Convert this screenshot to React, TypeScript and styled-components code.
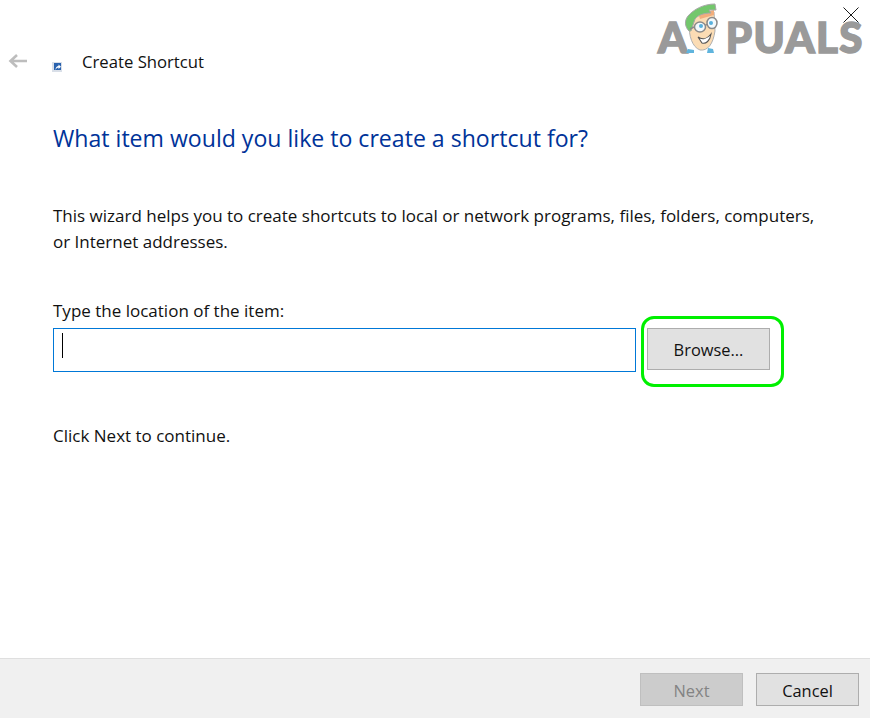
import styled, { createGlobalStyle } from "styled-components"

const GlobalStyle = createGlobalStyle`
html, body {
  margin: 0;
  padding: 0;
  background: #fff;
}
#root {
  width: 870px;
  height: 718px;
}
`

function FaceLogo() {
  return (
    <svg width="42" height="54" viewBox="0 0 42 54">
      <path d="M4 53 L6 49 L12 50 L12 53 Z M25 53 L26 48 L31 49 L32 53 Z" fill="#5fb4dd" />
      <path d="M7 24 C7 36 10 47 18 50 C26 51 31 44 33 31 L32 12 L16 14 Z" fill="#fbdcb4" stroke="#b0b0b0" strokeWidth="1" />
      <path d="M16 13 L32 10 L32 15 L18 19 Z" fill="#f2ad7c" />
      <path d="M7 31 C3 27 2 21 6 16 C12 9 22 4 33 4 L34 10 L27 10 L29 13 C22 13 16 15 13 19 L11 25 L9 31 Z" fill="#73c76c" stroke="#a8a8a8" strokeWidth="1" />
      <ellipse cx="18" cy="27" rx="5.5" ry="5" fill="#f3f9fc" stroke="#8a8a8a" strokeWidth="1.5" />
      <ellipse cx="30" cy="23" rx="5" ry="5.5" fill="#f3f9fc" stroke="#8a8a8a" strokeWidth="1.5" />
      <circle cx="19" cy="26" r="2" fill="#58b0dc" />
      <circle cx="29" cy="23" r="2" fill="#58b0dc" />
      <path d="M12 27 L8 29 M23.5 25 L25 24.5" stroke="#8a8a8a" strokeWidth="1.5" />
      <path d="M16 37 C20 40 25 39 29 34 C28 41 24 44 20 43 Z" fill="#fff" stroke="#555" strokeWidth="1.1" />
    </svg>
  )
}

function ShortcutIcon() {
  return (
    <svg width="10" height="10" viewBox="0 0 10 10">
      <rect width="10" height="10" fill="#d9dfe8" />
      <rect x="2" y="1" width="7" height="7" fill="#2a62ae" />
      <path d="M3.5 8 C3.5 5.5 5 4 6.5 4 L6.5 2.5 L9 4.8 L6.5 7 L6.5 5.6 C5.5 5.6 4.5 6.4 3.5 8 Z" fill="#fff" />
    </svg>
  )
}

function BackArrow() {
  return (
    <svg width="20" height="16" viewBox="0 0 20 16">
      <path d="M19 8 H3 M9 2 L2.5 8 L9 14" fill="none" stroke="#bdbdbd" strokeWidth="2.6" />
    </svg>
  )
}

function CloseIcon() {
  return (
    <svg width="16" height="16" viewBox="0 0 16 16">
      <path d="M0.5 0.5 L15.5 15.5 M15.5 0.5 L0.5 15.5" stroke="#1a1a1a" strokeWidth="1" />
    </svg>
  )
}

export default function App() {
  return (
    <>
      <GlobalStyle />
      <Window>
        <Watermark>
          <LogoText>A</LogoText>
          <LogoFace><FaceLogo /></LogoFace>
          <LogoText>PUALS</LogoText>
        </Watermark>
        <CloseSpot><CloseIcon /></CloseSpot>

        <Content>
          <TitleBar>
            <BackSlot><BackArrow /></BackSlot>
            <IconSlot><ShortcutIcon /></IconSlot>
            <TitleText>Create Shortcut</TitleText>
          </TitleBar>

          <Body>
            <Heading>What item would you like to create a shortcut for?</Heading>
            <Intro>
              This wizard helps you to create shortcuts to local or network programs, files, folders, computers,
              <br />
              or Internet addresses.
            </Intro>
            <FieldLabel>Type the location of the item:</FieldLabel>
            <FieldRow>
              <LocationBox>
                <Caret />
              </LocationBox>
              <Highlight>
                <DialogButton $width={123} $height={42}>Browse...</DialogButton>
              </Highlight>
            </FieldRow>
            <Hint>Click Next to continue.</Hint>
          </Body>
        </Content>

        <Footer>
          <DialogButton $width={103} $height={33} $disabled>Next</DialogButton>
          <DialogButton $width={103} $height={33}>Cancel</DialogButton>
        </Footer>
      </Window>
    </>
  )
}

const Window = styled.div`
  position: relative;
  width: 870px;
  height: 718px;
  display: flex;
  flex-direction: column;
  background: #fff;
  overflow: hidden;
  font-family: "Open Sans", "Noto Sans", sans-serif;
  color: #111;
`

const Watermark = styled.div`
  position: absolute;
  left: 658px;
  top: 0;
  display: flex;
  align-items: flex-start;
`

const LogoText = styled.span`
  font-family: Lato, "Open Sans", sans-serif;
  font-weight: 900;
  font-size: 42px;
  line-height: 74px;
  color: #9a9a9a;
  -webkit-text-stroke: 1.5px #9a9a9a;
  paint-order: stroke;
  stroke-linejoin: round;
  letter-spacing: 1.3px;
`

const LogoFace = styled.span`
  display: block;
  line-height: 0;
  margin-left: -7px;
  margin-right: 2px;
`

const CloseSpot = styled.span`
  position: absolute;
  left: 843px;
  top: 7px;
  line-height: 0;
`

const Content = styled.main`
  flex: 1;
  display: flex;
  flex-direction: column;
`

const TitleBar = styled.header`
  display: flex;
  align-items: center;
  height: 44px;
  padding-top: 40px;
`

const BackSlot = styled.span`
  width: 52px;
  padding-left: 8px;
  box-sizing: border-box;
  line-height: 0;
  margin-top: -3px;
`

const IconSlot = styled.span`
  width: 30px;
  line-height: 0;
  margin-top: 9px;
`

const TitleText = styled.h1`
  margin: 0;
  font-size: 16.7px;
  font-weight: 400;
  line-height: 24px;
  margin-top: -1px;
`

const Body = styled.section`
  padding-left: 53px;
`

const Heading = styled.h2`
  margin: 0;
  padding-top: 38px;
  font-size: 23.1px;
  font-weight: 400;
  line-height: 32px;
  color: #003399;
`

const Intro = styled.p`
  margin: 0;
  padding-top: 49px;
  font-size: 17px;
  line-height: 26px;
`

const FieldLabel = styled.div`
  padding-top: 44px;
  font-size: 17px;
  line-height: 24px;
`

const FieldRow = styled.div`
  display: flex;
  align-items: flex-start;
  height: 44px;
  margin-top: 5px;
`

const LocationBox = styled.div`
  box-sizing: border-box;
  width: 583px;
  height: 44px;
  border: 1px solid #0078d7;
  padding: 4px 8px;
`

const Caret = styled.div`
  width: 1px;
  height: 25px;
  background: #000;
`

const Highlight = styled.div`
  box-sizing: border-box;
  width: 143px;
  height: 71px;
  margin: -12px 0 -15px 5px;
  padding: 9px 0 0 3px;
  border: 3px solid #00f000;
  border-radius: 13px;
  display: flex;
  align-items: flex-start;
`

const DialogButton = styled.div<{ $width: number; $height: number; $disabled?: boolean }>`
  box-sizing: border-box;
  width: ${p => p.$width}px;
  height: ${p => p.$height}px;
  display: flex;
  align-items: center;
  justify-content: center;
  padding-top: 1px;
  font-size: 16.4px;
  background: ${p => (p.$disabled ? "#cccccc" : "#e1e1e1")};
  border: 1px solid ${p => (p.$disabled ? "#bfbfbf" : "#adadad")};
  color: ${p => (p.$disabled ? "#838383" : "#111")};
`

const Hint = styled.div`
  padding-top: 52px;
  font-size: 17px;
  line-height: 24px;
`

const Footer = styled.footer`
  box-sizing: border-box;
  height: 60px;
  display: flex;
  justify-content: flex-end;
  align-items: flex-start;
  gap: 13px;
  padding: 14px 11px 0 0;
  background: #f0f0f0;
  border-top: 1px solid #dfdfdf;
`
